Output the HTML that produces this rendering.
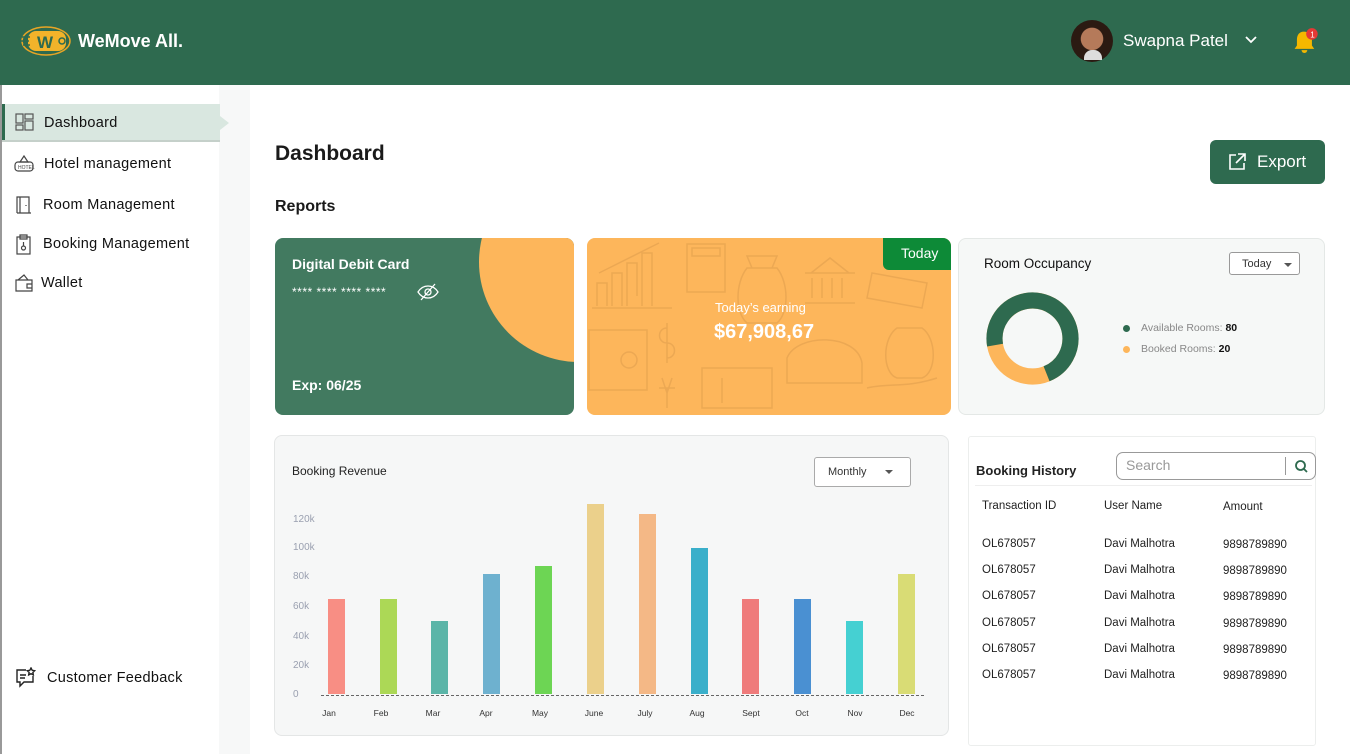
<!DOCTYPE html>
<html><head><meta charset="utf-8"><style>
*{box-sizing:border-box;margin:0;padding:0}
body{width:1350px;height:754px;overflow:hidden;font-family:"Liberation Sans",sans-serif;background:#fff;position:relative;color:#111}
.hdr{position:absolute;left:0;top:0;width:1350px;height:85px;background:#2e6a4f}
.abs{position:absolute}
.side{position:absolute;left:0;top:85px;width:219px;height:669px;background:#fff;border-left:2px solid #999;border-bottom-right-radius:30px;border-top-right-radius:30px}
.gap{position:absolute;left:219px;top:85px;width:31px;height:669px;background:#f7f8f8}
.nav{position:absolute;left:44px;font-size:14.5px;letter-spacing:.3px;color:#111}
.card{position:absolute;border-radius:8px;overflow:hidden}
.lbl{font-size:10px;color:#9aa0b0;position:absolute;left:293px}
.bar{position:absolute;width:17px}
.mon{position:absolute;font-size:8.5px;color:#333;width:40px;text-align:center;top:708px}
.row{position:absolute;font-size:11.5px;color:#222}
</style></head><body>
<div class="hdr"></div>
<svg class="abs" style="left:20px;top:25px" width="52" height="32" viewBox="0 0 52 32">
<ellipse cx="26" cy="16" rx="24" ry="14" fill="none" stroke="#e8a525" stroke-width="1.5"/>
<rect x="8" y="6" width="38" height="20" rx="8" fill="#f2b32a"/>
<path d="M2 12h8M1 16h8M3 20h7" stroke="#2e6a4f" stroke-width="1.5"/>
<text x="17" y="23" font-family="Liberation Sans" font-weight="bold" font-size="17" fill="#2e6a4f">W</text>
<circle cx="42" cy="16" r="3" fill="none" stroke="#2e6a4f" stroke-width="1.5"/>
</svg>
<div class="abs" style="left:78px;top:31px;color:#fff;font-weight:bold;font-size:18px">WeMove All.</div>
<div class="abs" style="left:1071px;top:20px;width:42px;height:42px;border-radius:50%;background:radial-gradient(circle at 50% 45%,#b57a5a 0 35%,#2b1a12 37% 100%)"></div>
<div class="abs" style="left:1084px;top:50px;width:18px;height:10px;background:#ddd;border-radius:8px 8px 0 0"></div>
<div class="abs" style="left:1123px;top:31px;color:#fff;font-size:17px">Swapna Patel</div>
<svg class="abs" style="left:1244px;top:35px" width="14" height="10"><path d="M2 2l5 5 5-5" stroke="#fff" stroke-width="1.8" fill="none"/></svg>
<svg class="abs" style="left:1290px;top:27px" width="30" height="30" viewBox="0 0 26 26"><path d="M12 4c-4 0-6 3-6 7v5l-2 3h17l-2-3v-5c0-4-3-7-7-7z" fill="#f5b800"/><path d="M10 20a2.5 2.5 0 0 0 5 0z" fill="#f5b800"/><circle cx="19" cy="6" r="5" fill="#e53935"/><text x="17.5" y="9" font-size="7" fill="#fff" font-family="Liberation Sans">1</text></svg>

<div class="side"></div><div class="gap"></div>
<div class="abs" style="left:2px;top:104px;width:218px;height:38px;background:#d9e7e0;border-bottom:2px solid #c5d0ca"></div>
<div class="abs" style="left:220px;top:116px;width:0;height:0;border-left:9px solid #d9e7e0;border-top:7px solid transparent;border-bottom:7px solid transparent"></div>
<div class="abs" style="left:2px;top:104px;width:3px;height:36px;background:#2e6a4f"></div>
<svg class="abs" style="left:15px;top:113px" width="20" height="18" fill="none" stroke="#555" stroke-width="1.2"><rect x="1" y="1" width="7" height="9"/><rect x="1" y="12" width="7" height="5"/><rect x="10" y="1" width="8" height="5"/><rect x="10" y="8" width="8" height="9"/></svg>
<div class="nav" style="top:115px">Dashboard</div>
<svg class="abs" style="left:13px;top:154px" width="22" height="20" fill="none" stroke="#444" stroke-width="1.2"><path d="M11 2l-4 6h8z"/><rect x="2" y="8" width="18" height="9" rx="3"/><text x="5" y="15" font-size="5" fill="#444" stroke="none">HOTEL</text></svg>
<div class="nav" style="top:156px">Hotel management</div>
<svg class="abs" style="left:14px;top:195px" width="20" height="20" fill="none" stroke="#444" stroke-width="1.2"><path d="M3 18V2h12v16M3 18h14M6 2v16M12 10v1"/></svg>
<div class="nav" style="top:197px;left:43px">Room Management</div>
<svg class="abs" style="left:14px;top:234px" width="20" height="22" fill="none" stroke="#444" stroke-width="1.2"><rect x="3" y="3" width="13" height="17"/><path d="M6 1h7v4H6zM9.5 8v4"/><circle cx="9.5" cy="14" r="2"/></svg>
<div class="nav" style="top:236px;left:43px">Booking Management</div>
<svg class="abs" style="left:13px;top:273px" width="22" height="20" fill="none" stroke="#444" stroke-width="1.2"><path d="M3 7h16v11H3zM5 7l6-5 4 5M14 11h5v4h-5z"/></svg>
<div class="nav" style="top:275px;left:41px">Wallet</div>
<svg class="abs" style="left:14px;top:667px" width="22" height="22" fill="none" stroke="#222" stroke-width="1.4"><path d="M12 3H3v12h3v4l4-4h9V9"/><path d="M6 8h6M6 11h5"/><path d="M17 1l1.2 2.3 2.5.4-1.8 1.7.4 2.5-2.3-1.2-2.3 1.2.4-2.5-1.8-1.7 2.5-.4z"/></svg>
<div class="nav" style="top:670px;left:47px">Customer Feedback</div>

<div class="abs" style="left:275px;top:142px;font-size:21px;font-weight:bold;color:#1a1a1a">Dashboard</div>
<div class="abs" style="left:275px;top:198px;font-size:16px;font-weight:bold;color:#1a1a1a">Reports</div>
<div class="abs" style="left:1210px;top:140px;width:115px;height:44px;background:#2e6a4f;border-radius:6px"></div>
<svg class="abs" style="left:1227px;top:152px" width="20" height="20" fill="none" stroke="#fff" stroke-width="1.6"><path d="M9 3H3v14h14v-6M11 2h7v7M18 2l-9 9"/></svg>
<div class="abs" style="left:1257px;top:152px;color:#fff;font-size:17px">Export</div>

<div class="card" style="left:275px;top:238px;width:299px;height:177px;background:#427a60">
<div class="abs" style="left:204px;top:-76px;width:200px;height:200px;border-radius:50%;background:#fdb65b"></div>
<div class="abs" style="left:17px;top:18px;color:#fff;font-size:14px;font-weight:bold">Digital Debit Card</div>
<div class="abs" style="left:17px;top:47px;color:#fff;font-size:12px;letter-spacing:.5px">**** **** **** ****</div>
<svg class="abs" style="left:142px;top:45px" width="22" height="18" fill="none" stroke="#fff" stroke-width="1.3"><path d="M1 9c5-8 15-8 20 0-5 8-15 8-20 0z"/><circle cx="11" cy="9" r="3"/><path d="M4 17L18 1"/></svg>
<div class="abs" style="left:17px;top:139px;color:#fff;font-size:14px;font-weight:bold">Exp: 06/25</div>
</div>
<div class="card" style="left:587px;top:238px;width:364px;height:177px;background:#fdb65b">
<svg class="abs" style="left:0;top:0" width="364" height="177" fill="none" stroke="#e3a04f" stroke-width="1.5">
<path d="M5 70h80M10 68V45h10v23M25 68V35h10v33M40 68V25h10v33M55 68V15h10v53M12 35l60-30"/>
<rect x="100" y="6" width="38" height="48"/><rect x="105" y="10" width="28" height="8"/>
<path d="M160 30c-12 15-12 45 0 55h30c12-10 12-40 0-55zM165 30l-5-12h30l-5 12"/>
<path d="M218 35h50M224 35l19-15 19 15M225 40v20M235 40v20M245 40v20M255 40v20M218 65h50"/>
<path d="M285 35l55 10-5 25-55-10z"/>
<rect x="2" y="92" width="58" height="60"/><circle cx="42" cy="122" r="8"/>
<path d="M80 90c-10 0-10 15 0 15s10 15 0 15M80 85v40M85 140l-5 15-5-15M72 150h16M80 150v20"/>
<path d="M115 130h70v40h-70zM135 140v25"/>
<path d="M200 120c10-25 70-25 75 5v20h-75z"/><path d="M280 150c20-5 40 0 70-10"/>
<path d="M310 90c-15 10-15 45 0 50h25c15-5 15-40 0-50z"/>
</svg>
<div class="abs" style="left:0;top:0;width:364px;height:177px;background:rgba(253,182,91,.35)"></div>
<div class="abs" style="left:296px;top:0;width:68px;height:32px;background:#0d8a37;border-bottom-left-radius:6px;color:#fff;font-size:14px;padding:7px 0 0 18px">Today</div>
<div class="abs" style="left:128px;top:62px;color:#fff;font-size:13px">Today’s earning</div>
<div class="abs" style="left:127px;top:83px;color:#fff;font-size:20px;font-weight:bold">$67,908,67</div>
</div>
<div class="card" style="left:958px;top:238px;width:367px;height:177px;background:#f6f8f7;border:1px solid #e4e8e6">
<div class="abs" style="left:25px;top:17px;font-size:13.5px">Room Occupancy</div>
<div class="abs" style="left:270px;top:13px;width:71px;height:23px;border:1px solid #999;border-radius:3px;background:#fff;font-size:11px;padding:5px 0 0 12px;color:#333">Today</div>
<div class="abs" style="left:325px;top:24px;border-top:4px solid #555;border-left:4px solid transparent;border-right:4px solid transparent"></div>
<svg class="abs" style="left:26px;top:52px" width="95" height="95" viewBox="0 0 100 100"><circle cx="50" cy="50" r="40" fill="none" stroke="#fdb65b" stroke-width="17"/><circle cx="50" cy="50" r="40" fill="none" stroke="#2e6a4f" stroke-width="17" stroke-dasharray="180 252" transform="rotate(-190 50 50)"/></svg>
<div class="abs" style="left:164px;top:86px;width:7px;height:7px;border-radius:50%;background:#2e6a4f"></div>
<div class="abs" style="left:182px;top:83px;font-size:10.5px;color:#888">Available Rooms: <b style="color:#111">80</b></div>
<div class="abs" style="left:164px;top:107px;width:7px;height:7px;border-radius:50%;background:#fdb65b"></div>
<div class="abs" style="left:182px;top:104px;font-size:10.5px;color:#888">Booked Rooms: <b style="color:#111">20</b></div>
</div>
<div class="card" style="left:274px;top:435px;width:675px;height:301px;background:#f6f7f7;border:1px solid #e4e6e6"></div>
<div class="abs" style="left:292px;top:464px;font-size:12px;color:#222">Booking Revenue</div>
<div class="abs" style="left:814px;top:457px;width:97px;height:30px;border:1px solid #aaa;border-radius:3px;background:#fff;font-size:11px;padding:8px 0 0 13px;color:#333">Monthly</div>
<div class="abs" style="left:885px;top:470px;border-top:4px solid #555;border-left:4px solid transparent;border-right:4px solid transparent"></div>
<div class="lbl" style="top:514px">120k</div><div class="lbl" style="top:542px">100k</div><div class="lbl" style="top:571px">80k</div><div class="lbl" style="top:601px">60k</div><div class="lbl" style="top:631px">40k</div><div class="lbl" style="top:660px">20k</div><div class="lbl" style="top:689px">0</div>
<div class="abs" style="left:321px;top:695px;width:603px;border-top:1px dashed #666"></div>
<div class="bar" style="left:328px;top:599px;height:95px;background:#f88e84"></div>
<div class="bar" style="left:380px;top:599px;height:95px;background:#acd856"></div>
<div class="bar" style="left:431px;top:621px;height:73px;background:#5bb5a8"></div>
<div class="bar" style="left:483px;top:574px;height:120px;background:#6eb1cf"></div>
<div class="bar" style="left:535px;top:566px;height:128px;background:#6dd554"></div>
<div class="bar" style="left:587px;top:504px;height:190px;background:#ebd08b"></div>
<div class="bar" style="left:639px;top:514px;height:180px;background:#f4b886"></div>
<div class="bar" style="left:691px;top:548px;height:146px;background:#3aafca"></div>
<div class="bar" style="left:742px;top:599px;height:95px;background:#ef7b7b"></div>
<div class="bar" style="left:794px;top:599px;height:95px;background:#4a90d2"></div>
<div class="bar" style="left:846px;top:621px;height:73px;background:#45d0d2"></div>
<div class="bar" style="left:898px;top:574px;height:120px;background:#d9dc75"></div>
<div class="mon" style="left:309px">Jan</div><div class="mon" style="left:361px">Feb</div><div class="mon" style="left:413px">Mar</div><div class="mon" style="left:466px">Apr</div><div class="mon" style="left:520px">May</div><div class="mon" style="left:574px">June</div><div class="mon" style="left:625px">July</div><div class="mon" style="left:677px">Aug</div><div class="mon" style="left:731px">Sept</div><div class="mon" style="left:782px">Oct</div><div class="mon" style="left:835px">Nov</div><div class="mon" style="left:887px">Dec</div>
<div class="card" style="left:968px;top:436px;width:348px;height:310px;background:#fff;border:1px solid #eceeed;border-radius:3px"></div>
<div class="abs" style="left:976px;top:463px;font-size:13px;font-weight:bold;color:#222">Booking History</div>
<div class="abs" style="left:1116px;top:452px;width:200px;height:28px;border:1px solid #999;border-radius:7px;background:#fff"></div>
<div class="abs" style="left:1126px;top:457px;font-size:14px;color:#999">Search</div>
<div class="abs" style="left:1285px;top:457px;width:1px;height:18px;background:#999"></div>
<svg class="abs" style="left:1294px;top:459px" width="14" height="14" fill="none" stroke="#2e6a4f" stroke-width="1.8"><circle cx="6.5" cy="6.5" r="4.5"/><path d="M10 10l3 3"/></svg>
<div class="abs" style="left:975px;top:485px;width:337px;height:1px;background:#eee"></div>
<div class="row" style="left:982px;top:500px">Transaction ID</div><div class="row" style="left:1104px;top:500px">User Name</div><div class="row" style="left:1223px;top:501px">Amount</div>
<div class="row" style="left:982px;top:538px">OL678057</div><div class="row" style="left:1104px;top:538px">Davi Malhotra</div><div class="row" style="left:1223px;top:539px">9898789890</div>
<div class="row" style="left:982px;top:564px">OL678057</div><div class="row" style="left:1104px;top:564px">Davi Malhotra</div><div class="row" style="left:1223px;top:565px">9898789890</div>
<div class="row" style="left:982px;top:590px">OL678057</div><div class="row" style="left:1104px;top:590px">Davi Malhotra</div><div class="row" style="left:1223px;top:591px">9898789890</div>
<div class="row" style="left:982px;top:617px">OL678057</div><div class="row" style="left:1104px;top:617px">Davi Malhotra</div><div class="row" style="left:1223px;top:618px">9898789890</div>
<div class="row" style="left:982px;top:643px">OL678057</div><div class="row" style="left:1104px;top:643px">Davi Malhotra</div><div class="row" style="left:1223px;top:644px">9898789890</div>
<div class="row" style="left:982px;top:669px">OL678057</div><div class="row" style="left:1104px;top:669px">Davi Malhotra</div><div class="row" style="left:1223px;top:670px">9898789890</div>
</body></html>
